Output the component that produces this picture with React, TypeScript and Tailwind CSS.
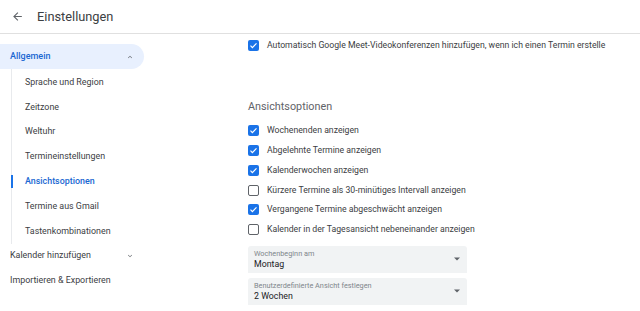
import React from "react";

const font = { fontFamily: "Roboto, 'Liberation Sans', sans-serif" };

function Check({ on }: { on: boolean }) {
  if (on)
    return (
      <span className="w-[11px] h-[11px] rounded-[2px] bg-[#1a73e8] flex items-center justify-center shrink-0">
        <svg width="9" height="9" viewBox="0 0 24 24">
          <path d="M4 12.5l5 5L20 6.5" fill="none" stroke="white" strokeWidth="3.2" />
        </svg>
      </span>
    );
  return <span className="w-[11px] h-[11px] rounded-[2px] border-[1.5px] border-[#5f6368] shrink-0" />;
}

function Row({ on, text }: { on: boolean; text: string }) {
  return (
    <div className="h-[19.8px] flex items-center gap-[8px]">
      <Check on={on} />
      <span className="text-[8.7px] text-[#3c4043]">{text}</span>
    </div>
  );
}

function Select({ label, value }: { label: string; value: string }) {
  return (
    <div className="w-[219px] h-[27px] bg-[#f1f3f4] rounded-t-[3px] flex items-center pl-[6px] pr-[7px]">
      <div className="flex-1 flex flex-col leading-none">
        <span className="text-[7.3px] text-[#80868b]">{label}</span>
        <span className="text-[8.8px] text-[#202124] mt-[3px]">{value}</span>
      </div>
      <svg width="6" height="4" viewBox="0 0 10 5">
        <path d="M0 0l5 5 5-5z" fill="#5f6368" />
      </svg>
    </div>
  );
}

const sub = [
  "Sprache und Region",
  "Zeitzone",
  "Weltuhr",
  "Termineinstellungen",
  "Ansichtsoptionen",
  "Termine aus Gmail",
  "Tastenkombinationen",
];

export default function App() {
  return (
    <div className="w-[640px] h-[311px] bg-white overflow-hidden" style={font}>
      <div className="h-[34px] border-b border-[#e0e0e0] flex items-center">
        <svg className="ml-[11px]" width="13" height="13" viewBox="0 0 24 24">
          <path d="M20 11H7.83l5.59-5.59L12 4l-8 8 8 8 1.41-1.41L7.83 13H20v-2z" fill="#5f6368" />
        </svg>
        <span className="ml-[13px] text-[12.8px] text-[#3c4043]">Einstellungen</span>
      </div>
      <div className="flex">
        <div className="w-[232px] pt-[10px]">
          <div className="w-[144px] h-[25px] bg-[#e8f0fe] rounded-r-full flex items-center pl-[10px] pr-[10px]">
            <span className="flex-1 text-[9px] font-medium text-[#1967d2]">Allgemein</span>
            <svg width="8" height="8" viewBox="0 0 24 24">
              <path d="M7.41 15.41L12 10.83l4.59 4.58L18 14l-6-6-6 6z" fill="#5f6368" />
            </svg>
          </div>
          <div className="ml-[11px] border-l border-[#e8eaed] pt-[1px]">
            {sub.map((s) => (
              <div key={s} className="h-[24.8px] flex items-center relative">
                {s === "Ansichtsoptionen" && (
                  <span className="absolute left-[-1px] top-[6px] h-[13px] w-[2px] bg-[#1a73e8]" />
                )}
                <span
                  className={
                    "ml-[13px] text-[8.9px] " +
                    (s === "Ansichtsoptionen" ? "text-[#1967d2] font-medium" : "text-[#3c4043]")
                  }
                >
                  {s}
                </span>
              </div>
            ))}
          </div>
          <div className="h-[25px] flex items-center pl-[10px] w-[144px] pr-[10px]">
            <span className="flex-1 text-[8.9px] text-[#3c4043]">Kalender hinzufügen</span>
            <svg width="8" height="8" viewBox="0 0 24 24">
              <path d="M7.41 8.59L12 13.17l4.59-4.58L18 10l-6 6-6-6z" fill="#5f6368" />
            </svg>
          </div>
          <div className="h-[25px] flex items-center pl-[10px]">
            <span className="text-[8.9px] text-[#3c4043]">Importieren &amp; Exportieren</span>
          </div>
        </div>
        <div className="pl-[16px] pt-[2px]">
          <Row on text="Automatisch Google Meet-Videokonferenzen hinzufügen, wenn ich einen Termin erstelle" />
          <div className="mt-[41px] text-[10.8px] text-[#5f6368] h-[20px] flex items-center">Ansichtsoptionen</div>
          <div className="mt-[4px]">
            <Row on text="Wochenenden anzeigen" />
            <Row on text="Abgelehnte Termine anzeigen" />
            <Row on text="Kalenderwochen anzeigen" />
            <Row on={false} text="Kürzere Termine als 30-minütiges Intervall anzeigen" />
            <Row on text="Vergangene Termine abgeschwächt anzeigen" />
            <Row on={false} text="Kalender in der Tagesansicht nebeneinander anzeigen" />
          </div>
          <div className="mt-[6px] flex flex-col gap-[5px]">
            <Select label="Wochenbeginn am" value="Montag" />
            <Select label="Benutzerdefinierte Ansicht festlegen" value="2 Wochen" />
          </div>
        </div>
      </div>
    </div>
  );
}
